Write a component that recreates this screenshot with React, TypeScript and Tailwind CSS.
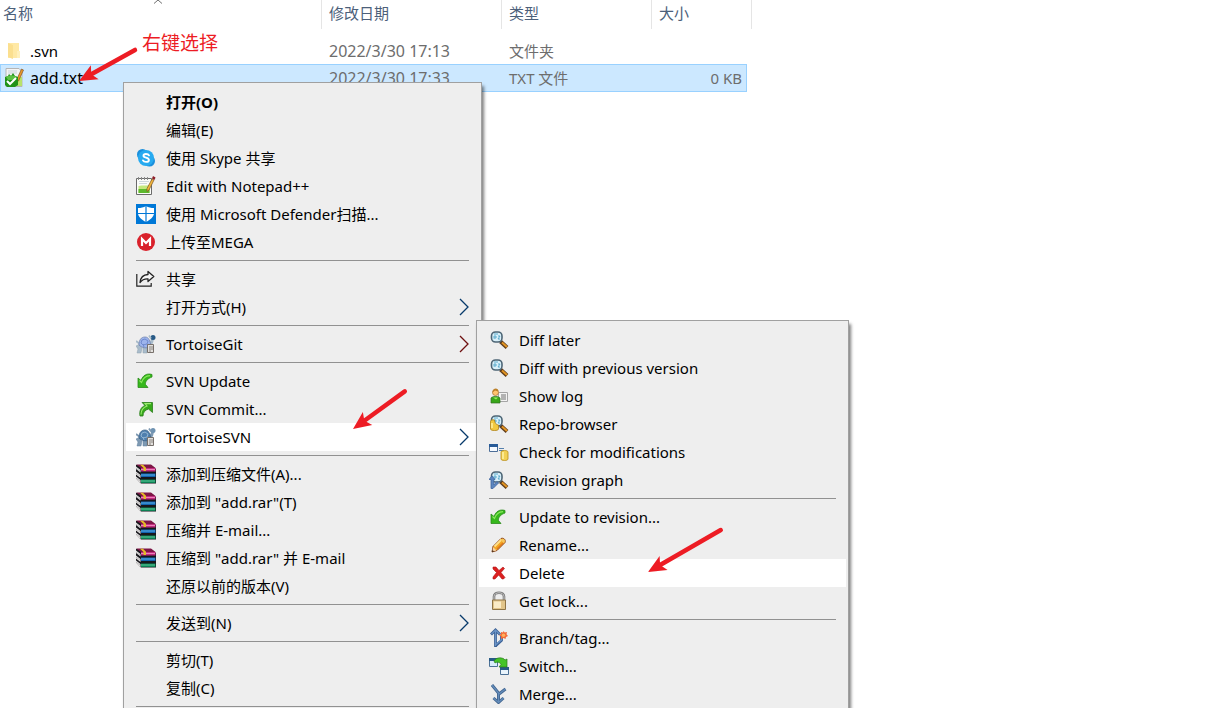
import type { ReactNode } from 'react';
import clsx from 'clsx';

type Entry =
  | { label: string; icon?: ReactNode; arrow?: 'blue' | 'red'; bold?: boolean; active?: boolean }
  | 'separator';

function Svg({ children }: { children: ReactNode }) {
  return (
    <svg viewBox="0 0 20 20" className="size-5 shrink-0" aria-hidden="true">
      {children}
    </svg>
  );
}

function FolderIcon() {
  return (
    <Svg>
      <path d="M4 2h11v15H4z" fill="#ffe9a6" />
      <path d="M4 2l5 2v14l-5-2z" fill="#fbdf8f" />
      <path d="M13 10h3v7h-3z" fill="#fff0bd" />
    </Svg>
  );
}

function TextFileIcon() {
  return (
    <Svg>
      <path d="M2 .5h13l3 3v15H2z" fill="#f4f4f4" stroke="#b5b5b5" />
      <path d="M4 3h9M4 5h9" stroke="#c9d3dc" />
      <path d="M10 9h8v9h-8z" fill="#b9e26a" />
      <path d="M17.500 1l2 1-5 11-2 1V12z" fill="#e99a2a" stroke="#77431a" strokeWidth=".6" />
      <path d="M1 9l3-1 1-2 2 2 2-3 2 3 3 1v8l-3 2H3l-2-2z" fill="#219218" />
      <path d="M2 9c3-2 8-2 11 0l-3 3H4z" fill="#5cc244" />
      <path d="M3 13l3 3 6-6" stroke="#fff" strokeWidth="2" fill="none" />
    </Svg>
  );
}

function SkypeIcon() {
  return (
    <Svg>
      <circle cx="6.500" cy="6.500" r="5.500" fill="#1b8fdc" />
      <circle cx="13.500" cy="13" r="5.500" fill="#1b8fdc" />
      <circle cx="10" cy="10" r="8" fill="#27aaf0" />
      <path
        d="M13 7.300C12.200 5.700 7.500 5.300 7.500 7.700c0 2.500 5.400 1.400 5.400 4.200 0 2.600-5 2.500-5.900.5"
        stroke="#fff"
        strokeWidth="1.900"
        strokeLinecap="round"
        fill="none"
      />
    </Svg>
  );
}

function NotepadIcon() {
  return (
    <Svg>
      <path d="M.5 2.500h15v16H.5z" fill="#fbfcf9" stroke="#6b6b6b" />
      <path d="M2.500 10c4-1 7 0 11-1v8h-11z" fill="#c3e87c" />
      <path d="M2.500 13h11v4h-11z" fill="#5cb92d" />
      <path d="M3 5.500h10M3 7.500h8" stroke="#cfd8dd" />
      <path d="M2.500 1v3M5.500 1v3M8.500 1v3M11.500 1v3" stroke="#8b8b8b" />
      <path d="M16 3l2 1-5 10-2 1.500v-3z" fill="#f3b63a" stroke="#7a5325" strokeWidth=".7" />
      <path d="M17 0l2.500 1.500-1 2.500L16 2.500z" fill="#8e2029" />
    </Svg>
  );
}

function DefenderIcon() {
  return (
    <Svg>
      <path d="M0 0h20v20H0z" fill="#0078d7" />
      <path d="M10 2c2.500 1.500 5 2 8 2v5c0 4-4 7-8 9-4-2-8-5-8-9V4c3 0 5.500-.5 8-2z" fill="#fff" />
      <path d="M10 2v16M2 9.500h16" stroke="#0078d7" strokeWidth="1.200" />
    </Svg>
  );
}

function MegaIcon() {
  return (
    <Svg>
      <circle cx="10" cy="10" r="9" fill="#d9212b" />
      <path d="M6 14V7l4 4 4-4v7" stroke="#fff" strokeWidth="2.200" fill="none" />
    </Svg>
  );
}

function ShareIcon() {
  return (
    <Svg>
      <path d="M.8 5v12.200h14.400V14" stroke="#222" strokeWidth="1.200" fill="none" />
      <path
        d="M12 2.500l5.800 5-5.800 5V9.800C8.500 9.600 6 10.700 4 13.500 4.500 9 7.500 5.700 12 5.500z"
        fill="#f6f6f6"
        stroke="#222"
        strokeWidth="1.300"
        strokeLinejoin="round"
      />
    </Svg>
  );
}

function TortoiseIcon({ git = false }: { git?: boolean }) {
  const shell = git ? '#9db4ec' : '#4f7fae';
  const skin = git ? '#a9bccb' : '#7f9ab3';
  return (
    <Svg>
      <path d="M13 10l2-5h3l-1 4-3 4z" fill={skin} />
      <circle cx="17" cy="3.500" r="2.500" fill={git ? '#285a86' : '#6f93b2'} />
      <path d="M13 1.500l2 3M0 7l4 3" stroke={skin} strokeWidth="1.800" />
      <path d="M0 12l4-2 2 4-1 5H1l1-4zM7 13h4v6H7z" fill={skin} stroke={git ? '#8ea0ae' : '#5d7f9e'} strokeWidth=".5" />
      <path
        d="M3 11c0-5 2-8 6-8s5 4 6 9c-4 3-9 2-12-1z"
        fill={shell}
        stroke={git ? '#6a7da8' : '#365c80'}
        strokeWidth=".7"
      />
      <path d="M6 6l3-1 3 2-1 3-4 1-2-2zM7 10l1 3M11 10l2 2" stroke={git ? '#6f8ace' : '#91b4d2'} fill="none" />
      <path d="M11.500 10.500h6v8h-6z" fill="#e3e1de" stroke="#77706b" />
      <path d="M13 13h4M13 15h4M13 17h2" stroke="#77706b" strokeWidth=".8" />
    </Svg>
  );
}

function UpdateIcon() {
  return (
    <Svg>
      <path
        d="M2 7v9.500h10L9.500 13.500C9 10 12 7.500 16 6V3.500C11 2 7 4 5 9.500z"
        fill="#36b81c"
        stroke="#2b8a1a"
        strokeWidth=".8"
      />
      <path d="M3.500 9.500l2 2C7 7 9.500 4.800 14 4.600" stroke="#8be85f" strokeWidth="1.100" fill="none" />
    </Svg>
  );
}

function CommitIcon() {
  return (
    <Svg>
      <path
        d="M16.500 3.500H6l3 3C5 8 3 12 4 17h3c0-3.500 2-6 5.500-7l4 3.500z"
        fill="#36a91a"
        stroke="#2b7c1c"
        strokeWidth=".8"
      />
      <path d="M5 15.500C5 11 7 8.500 11 7L9 4.600h6" stroke="#9cec70" strokeWidth="1.100" fill="none" />
    </Svg>
  );
}

function RarIcon() {
  return (
    <Svg>
      <path d="M0 1h15l5 4v14.500H5L0 15z" fill="#17171c" />
      <path d="M0 .5h15l4.500 3.500H5z" fill="#7e1646" />
      <path d="M5 4h14.500v3.500H5z" fill="#c42a80" />
      <path d="M5 5.500h14" stroke="#ea83b8" />
      <path d="M5 9.500h14.500V13H5z" fill="#1263b0" />
      <path d="M5 11h14" stroke="#5ab3e8" />
      <path d="M5 15.500h14.500V19H5z" fill="#0c8053" />
      <path d="M5 17h14" stroke="#5fd0a0" />
      <path d="M0 2.500L4.500 6v2.500L0 5zM0 7.500L4.500 11v3L0 10.500zM0 12.500L4.500 16v3L0 15.500z" fill="#eceaea" />
      <path d="M0 4l4.500 3.500M0 9l4.500 3.500M0 14l4.500 3.500" stroke="#8c8c8c" strokeWidth=".6" />
      <path d="M4 .8h3l3 3V7H7.500V4z" fill="#e3bb26" />
    </Svg>
  );
}

function Lens() {
  return (
    <>
      <path d="M11.500 11.500l6.500 6" stroke="#5d3c1d" strokeWidth="4" />
      <path d="M13 12.500l5 4.500" stroke="#e29522" strokeWidth="2" />
      <rect x="2.500" y="2" width="10.500" height="10" rx="4" fill="#d9f0fa" stroke="#4d6575" strokeWidth="1.600" />
      <path d="M5 8.500V6h2v2H5m4-2h2L9 9h2M5 4h4" stroke="#51a5c8" strokeWidth=".9" fill="none" />
    </>
  );
}

function DiffIcon() {
  return (
    <Svg>
      <Lens />
    </Svg>
  );
}

function LogIcon() {
  return (
    <Svg>
      <path d="M9.500 6.500h9v9h-9z" fill="#f3f3f3" stroke="#a5a5a5" />
      <path d="M12 9h5M12 11h5M12 13h5" stroke="#737373" />
      <path d="M2 17v-5c1-2 8-2 9 0v5z" fill="#38a719" stroke="#316f22" strokeWidth=".7" />
      <path d="M4 11.500l3 2 2-2" fill="#9bed61" />
      <circle cx="6.500" cy="6.500" r="3" fill="#ffc36e" stroke="#a57034" strokeWidth=".7" />
      <path d="M3.500 6.500c0-5 6-5 6-1L6 4.500z" fill="#bd8129" />
    </Svg>
  );
}

function RepoIcon() {
  return (
    <Svg>
      <Lens />
      <path d="M1.500 7.500c0-1.500 2-2 4-1.500 0 3 2 5 4 5v4c0 2-8 2-8 0z" fill="#f1c93f" stroke="#ae8217" strokeWidth=".8" />
      <path d="M3 9v5" stroke="#fff0a0" strokeWidth="1.500" />
    </Svg>
  );
}

function CheckIcon() {
  return (
    <Svg>
      <path d="M.5 2.500h8v7h-8z" fill="#f6faff" stroke="#4d6e98" />
      <path d="M0 2h9v3H0z" fill="#285b98" />
      <path d="M10 6.500h5M10 8.500h5" stroke="#5580ad" />
      <path d="M12 10c0-2 7-2 7 0v7c0 2-7 2-7 0z" fill="#f2d155" stroke="#b88d1b" strokeWidth=".8" />
      <path d="M14 10v7" stroke="#fff2a7" strokeWidth="1.500" />
    </Svg>
  );
}

function GraphIcon() {
  return (
    <Svg>
      <Lens />
      <path d="M0 9.500L3 6l3 3.500H4.800V15l3-3.500L9.500 13 4 18.500H2V9.500z" fill="#5c86bf" stroke="#3d65a0" strokeWidth=".8" />
    </Svg>
  );
}

function RenameIcon() {
  return (
    <Svg>
      <path d="M4 11.500L12 3.500c2.500-1 5 1 4 4l-8 8L3 17z" fill="#f5a722" stroke="#8a4318" strokeWidth="1" />
      <path d="M5.500 11.500l7-7" stroke="#ffe08a" strokeWidth="1.800" />
      <path d="M8 14l7-7" stroke="#e07a1e" strokeWidth="1.500" />
      <path d="M12.500 4c2-.8 4 1 3.200 3.200l-1 1-3.500-3.500z" fill="#f6c65a" />
      <path d="M4 12l3.500 3.500-4 1z" fill="#f5d2a5" />
      <path d="M3.500 15l1.500 1.500L3 17z" fill="#3a2a1a" />
    </Svg>
  );
}

function DeleteIcon() {
  return (
    <Svg>
      <path
        d="M4 4h3l3 3.500L14 4l1.500 1.500L12 9.500l4 5L14.500 16H13l-3.300-4L6 16H4v-2l3.500-4.500L4 6z"
        fill="#dc2020"
        stroke="#ae1515"
        strokeWidth=".6"
      />
    </Svg>
  );
}

function LockIcon() {
  return (
    <Svg>
      <path d="M5 10V5.500c0-5 10-5 10 0V10" stroke="#777" strokeWidth="2.600" fill="none" />
      <path d="M5 10V5.500c0-5 10-5 10 0V10" stroke="#c4c4c4" strokeWidth="1" fill="none" />
      <path d="M3.500 9h13v9.500h-13z" fill="#e2c58a" stroke="#8e7446" />
      <path d="M5 10.500h7V17H5z" fill="#faebc6" />
    </Svg>
  );
}

function BranchIcon() {
  return (
    <Svg>
      <path d="M6.500 19V3M2 6.500L6.500 2 11 6.500M7 17.500l5.500-5V8" stroke="#3c6296" strokeWidth="2.800" fill="none" />
      <path d="M6.500 18V3M2.500 6L6.500 2 10.500 6M7 16.500l5.500-4.500V8" stroke="#6a93c6" strokeWidth="1.200" fill="none" />
      <path d="M14.500 3l1.200 1.500L18 4l-.5 2.300L19 8l-2 1-.5 2-2-1-2.500 1V8.500L10 7l2-1V4l2 .500z" fill="#f36936" />
      <circle cx="14.500" cy="7.300" r="1.800" fill="#ffb05c" />
    </Svg>
  );
}

function SwitchIcon() {
  return (
    <Svg>
      <path d="M.5 3.500h8v7h-8z" fill="#d8ecfb" stroke="#4b7095" />
      <path d="M0 2h9v3H0z" fill="#285b86" />
      <path d="M11.500 11.500h8v7h-8z" fill="#e9f4fc" stroke="#4b7095" />
      <path d="M11 11h9v3h-9z" fill="#285b86" />
      <path d="M5 5c2-4 9-4 11-1l2-1v8h-8l2-2.500C11 6 8 5.500 6 7z" fill="#45c428" stroke="#28791b" strokeWidth=".7" />
    </Svg>
  );
}

function MergeIcon() {
  return (
    <Svg>
      <path d="M3 1l6.500 8v9M16.500 5L10 10M4.500 14l5 4.500 5-4.500" stroke="#42658f" strokeWidth="3" fill="none" />
      <path d="M3 1l6.500 8v9M16.500 5L10 10M4.500 14l5 4.500 5-4.500" stroke="#638cba" strokeWidth="1.300" fill="none" />
    </Svg>
  );
}

const fileMenu: Entry[] = [
  { label: '打开(O)', bold: true },
  { label: '编辑(E)' },
  { label: '使用 Skype 共享', icon: <SkypeIcon /> },
  { label: 'Edit with Notepad++', icon: <NotepadIcon /> },
  { label: '使用 Microsoft Defender扫描...', icon: <DefenderIcon /> },
  { label: '上传至MEGA', icon: <MegaIcon /> },
  'separator',
  { label: '共享', icon: <ShareIcon /> },
  { label: '打开方式(H)', arrow: 'blue' },
  'separator',
  { label: 'TortoiseGit', icon: <TortoiseIcon git />, arrow: 'red' },
  'separator',
  { label: 'SVN Update', icon: <UpdateIcon /> },
  { label: 'SVN Commit...', icon: <CommitIcon /> },
  { label: 'TortoiseSVN', icon: <TortoiseIcon />, arrow: 'blue', active: true },
  'separator',
  { label: '添加到压缩文件(A)...', icon: <RarIcon /> },
  { label: '添加到 "add.rar"(T)', icon: <RarIcon /> },
  { label: '压缩并 E-mail...', icon: <RarIcon /> },
  { label: '压缩到 "add.rar" 并 E-mail', icon: <RarIcon /> },
  { label: '还原以前的版本(V)' },
  'separator',
  { label: '发送到(N)', arrow: 'blue' },
  'separator',
  { label: '剪切(T)' },
  { label: '复制(C)' },
  'separator',
];

const svnMenu: Entry[] = [
  { label: 'Diff later', icon: <DiffIcon /> },
  { label: 'Diff with previous version', icon: <DiffIcon /> },
  { label: 'Show log', icon: <LogIcon /> },
  { label: 'Repo-browser', icon: <RepoIcon /> },
  { label: 'Check for modifications', icon: <CheckIcon /> },
  { label: 'Revision graph', icon: <GraphIcon /> },
  'separator',
  { label: 'Update to revision...', icon: <UpdateIcon /> },
  { label: 'Rename...', icon: <RenameIcon /> },
  { label: 'Delete', icon: <DeleteIcon />, active: true },
  { label: 'Get lock...', icon: <LockIcon /> },
  'separator',
  { label: 'Branch/tag...', icon: <BranchIcon /> },
  { label: 'Switch...', icon: <SwitchIcon /> },
  { label: 'Merge...', icon: <MergeIcon /> },
];

function Menu({ label, items, className }: { label: string; items: Entry[]; className: string }) {
  return (
    <div
      role="menu"
      aria-label={label}
      className={clsx(
        'absolute border border-[#a0a0a0] bg-[#eeeeee] px-0.5 py-[5px] text-black shadow-[2px_4px_3px_#00000080]',
        className,
      )}
    >
      {items.map((item, i) =>
        item === 'separator' ? (
          <div key={i} role="separator" className="mx-2.5 flex h-[9px] items-center">
            <div className="h-px w-full bg-[#919191]" />
          </div>
        ) : (
          <button
            key={i}
            type="button"
            role="menuitem"
            className={clsx(
              'flex h-7 w-full items-center gap-2.5 px-2.5 text-left hover:bg-white',
              item.bold && 'font-bold',
              item.active && 'bg-white',
            )}
          >
            {item.icon ?? <span className="size-5 shrink-0" />}
            <span className="flex-1 whitespace-nowrap">{item.label}</span>
            {item.arrow && (
              <svg
                viewBox="0 0 10 18"
                className={clsx('h-[18px] w-2.5', item.arrow === 'red' ? 'text-[#6e0f0f]' : 'text-[#073a6b]')}
                aria-hidden="true"
              >
                <path d="M1 1l8 8-8 8" fill="none" stroke="currentColor" strokeWidth="1.300" />
              </svg>
            )}
          </button>
        ),
      )}
    </div>
  );
}

function FileList() {
  return (
    <table className="w-[752px] table-fixed border-separate border-spacing-0 text-left text-[#6d6d6d]">
      <colgroup>
        <col className="w-[322px]" />
        <col className="w-[180px]" />
        <col className="w-[150px]" />
        <col className="w-[95px]" />
        <col className="w-[5px]" />
      </colgroup>
      <thead>
        <tr className="h-[29px] text-[#4c607a]">
          <th className="relative border-r border-[#e5e5e5] pb-1 pl-[3px] font-normal">
            名称
            <svg viewBox="0 0 10 4" className="absolute top-0 left-[153px] h-1 w-2.5" aria-hidden="true">
              <path d="M1 3.500L5 0l4 3.500" fill="none" stroke="#707070" />
            </svg>
          </th>
          <th className="border-r border-[#e5e5e5] pb-1 pl-[7px] font-normal">修改日期</th>
          <th className="border-r border-[#e5e5e5] pb-1 pl-[7px] font-normal">类型</th>
          <th colSpan={2} className="border-r border-[#e5e5e5] pb-1 pl-[7px] font-normal">
            大小
          </th>
        </tr>
      </thead>
      <tbody>
        <tr aria-hidden="true" className="h-2" />
        <tr className="h-[27px]">
          <td className="pl-1 text-black">
            <div className="flex items-center gap-1.5">
              <FolderIcon />
              .svn
            </div>
          </td>
          <td className="pl-[7px] text-[16px]">2022/3/30 17:13</td>
          <td className="pl-[7px]">文件夹</td>
          <td />
        </tr>
        <tr className="h-7">
          <td className="border-y border-l border-[#99d1ff] bg-[#cce8ff] pl-[3px] text-black">
            <div className="flex items-center gap-1.5 text-[16px]">
              <TextFileIcon />
              add.txt
            </div>
          </td>
          <td className="border-y border-[#99d1ff] bg-[#cce8ff] pl-[7px] text-[16px]">2022/3/30 17:33</td>
          <td className="border-y border-[#99d1ff] bg-[#cce8ff] pl-[7px]">TXT 文件</td>
          <td className="border-y border-r border-[#99d1ff] bg-[#cce8ff] pr-1 text-right">0 KB</td>
        </tr>
      </tbody>
    </table>
  );
}

// Arrow whose tip sits at x, y
function Arrow({ x, y, angle, length }: { x: number; y: number; angle: number; length: number }) {
  return (
    <g transform={`translate(${x} ${y}) rotate(${angle})`} fill="#ed1c24" stroke="#ed1c24">
      <path d="M0 0L18-8L15-2V2L18 8z" stroke="none" />
      <path d={`M14 0H${length}`} strokeWidth="4.500" strokeLinecap="round" />
    </g>
  );
}

export default function App() {
  return (
    <main className="relative h-screen overflow-hidden bg-white font-['Noto_Sans','Noto_Sans_CJK_SC',sans-serif] text-[15px] leading-5">
      <FileList />
      <Menu label="add.txt" items={fileMenu} className="top-[82px] left-[123px] w-[359px]" />
      <Menu label="TortoiseSVN" items={svnMenu} className="top-80 left-[476px] w-[373px]" />
      <p className="absolute top-[31px] left-[142px] text-[19px] leading-6 text-[#ed1c24]">右键选择</p>
      <svg className="pointer-events-none absolute inset-0 size-full" aria-hidden="true">
        <Arrow x={79} y={81} angle={-29} length={64} />
        <Arrow x={353} y={429} angle={-36} length={64} />
        <Arrow x={648} y={572} angle={-30} length={84} />
      </svg>
    </main>
  );
}
